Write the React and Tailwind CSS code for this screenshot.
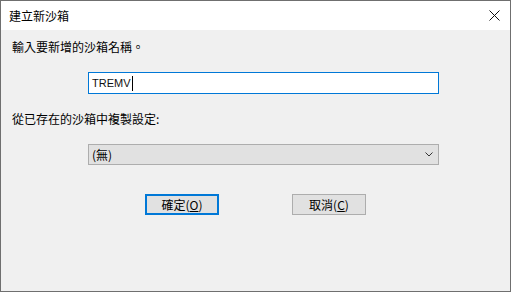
import { useState } from "react";

const CJK = { fontFamily: '"Noto Sans CJK TC", "Noto Sans", sans-serif' };

const NewSandboxDialog = () => {
  const [name, setName] = useState("TREMV");

  return (
    <div
      className="w-[511px] h-[292px] border border-[#6f6f6f] flex flex-col text-[12px] leading-[16px] text-black"
      style={CJK}
    >
      {/* NOTE: title bar */}
      <div className="h-[29px] bg-white flex items-center justify-between pl-[8px] pr-[9px]">
        <span className="text-[12px]">建立新沙箱</span>
        <svg width="11" height="11" viewBox="0 0 11 11" className="mr-[1px]">
          <path d="M0.5 0.5 L10.5 10.5 M10.5 0.5 L0.5 10.5" stroke="#111" strokeWidth="1" />
        </svg>
      </div>

      <div className="flex-1 bg-[#f0f0f0] pt-[9px] pl-[11px] flex flex-col items-start">
        <p>輸入要新增的沙箱名稱。</p>

        <div className="mt-[17px] ml-[76px] w-[351px] h-[22px] border border-[#0078d7] bg-white flex items-center pl-[3px]">
          <span
            className="text-[11px] text-[#111]"
            style={{ fontFamily: '"Liberation Sans", Arial, sans-serif' }}
          >
            {name}
          </span>
          <span className="w-px h-[15px] bg-black ml-px" />
        </div>

        <p className="mt-[17px]">從已存在的沙箱中複製設定:</p>

        <div className="mt-[17px] ml-[76px] w-[351px] h-[21px] border border-[#adadad] bg-[#e1e1e1] flex items-center justify-between pl-[3px] pr-[5px]">
          <span>(無)</span>
          <svg width="8" height="5" viewBox="0 0 8 5">
            <path d="M0.5 0.5 L4 4 L7.5 0.5" stroke="#333" strokeWidth="1" fill="none" />
          </svg>
        </div>

        <div className="mt-[29px] ml-[133px] flex gap-[73px]">
          <button className="w-[74px] h-[21px] border-2 border-[#0078d7] bg-[#e1e1e1] flex items-center justify-center">
            確定(<span className="underline">O</span>)
          </button>
          <button className="w-[74px] h-[21px] border border-[#adadad] bg-[#e1e1e1] flex items-center justify-center">
            取消(<span className="underline">C</span>)
          </button>
        </div>
      </div>
    </div>
  );
};

export default function App() {
  return <NewSandboxDialog />;
}
